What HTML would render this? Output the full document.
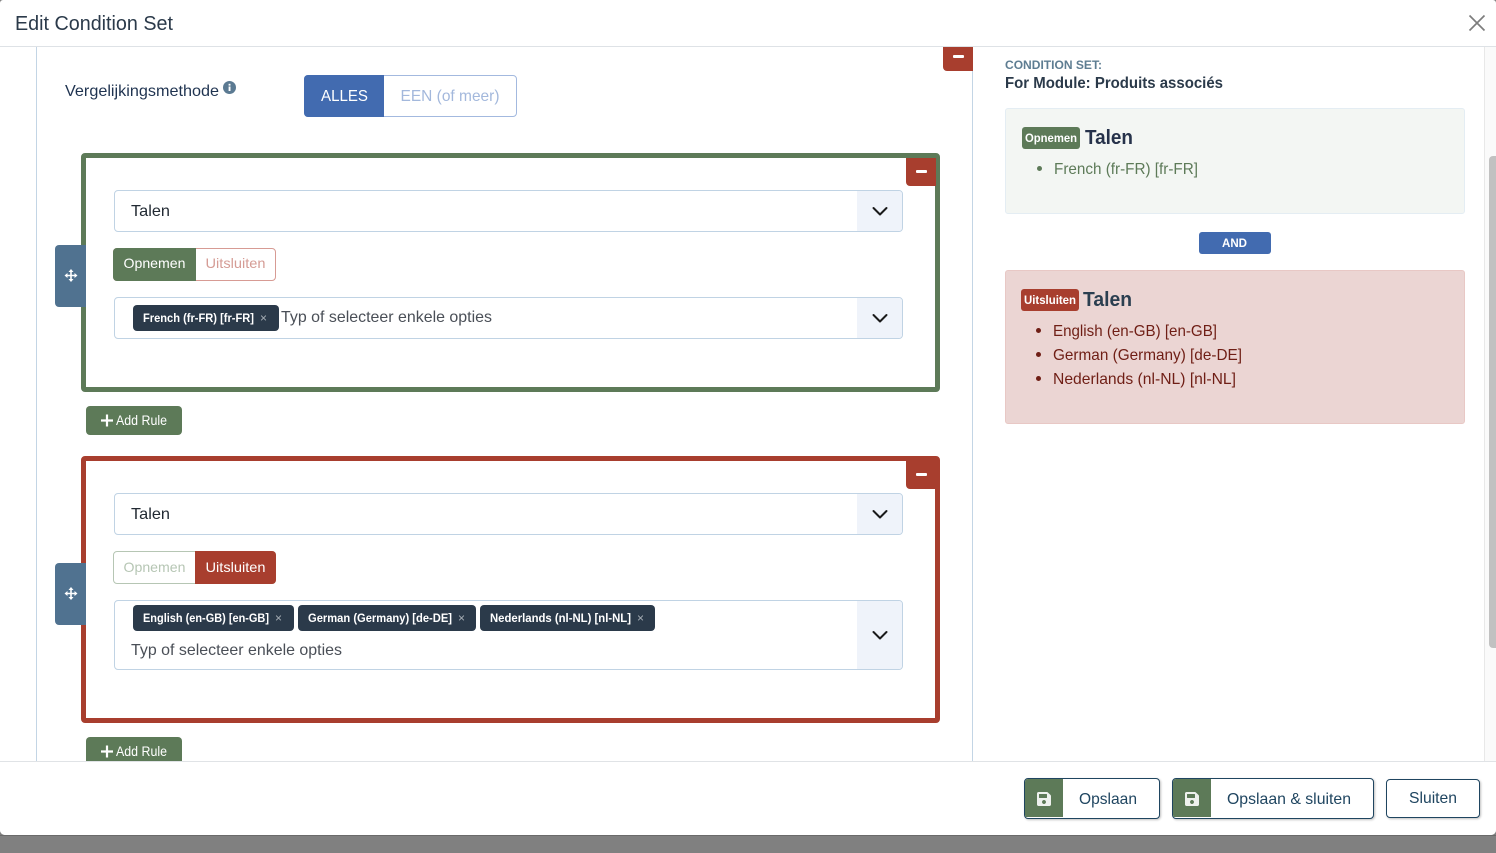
<!DOCTYPE html>
<html lang="nl">
<head>
<meta charset="utf-8">
<title>Edit Condition Set</title>
<style>
html,body{margin:0;padding:0;width:1496px;height:853px;overflow:hidden;background:#808080}
#m{position:absolute;left:0;top:0;width:1496px;height:835px;background:#fff;border-radius:3px 3px 5px 5px;overflow:hidden}
.b{position:absolute;box-sizing:border-box}
svg{position:absolute;left:0;top:0}
text{font-family:"Liberation Sans",sans-serif;white-space:pre}
</style>
</head>
<body>
<div class="b" style="left:0;top:835px;width:1496px;height:1px;background:#6a6a6a"></div>
<div id="m">
  <!-- scrollbar -->
  <div class="b" style="left:1484px;top:47px;width:12px;height:714px;background:#fafafa;border-left:1px solid #e8e8e8"></div>
  <div class="b" style="left:1489px;top:156px;width:7px;height:492px;background:#c1c1c1;border-radius:4px 0 0 4px"></div>

  <!-- lines -->
  <div class="b" style="left:36px;top:47px;width:1px;height:714px;background:#c3d5e5"></div>
  <div class="b" style="left:972px;top:47px;width:1px;height:714px;background:#c3d5e5"></div>

  <!-- top minus -->
  <div class="b" style="left:943px;top:47px;width:30px;height:24px;background:#a83e2e;border-radius:0 0 0 4px"></div>
  <div class="b" style="left:953px;top:55px;width:11px;height:3px;background:#fff;border-radius:1px"></div>

  <!-- ALLES group -->
  <div class="b" style="left:304px;top:75px;width:213px;height:42px;border:1px solid #a3b9df;border-radius:4px"></div>
  <div class="b" style="left:304px;top:75px;width:80px;height:42px;background:#426bb0;border-radius:4px 0 0 4px"></div>

  <!-- green box -->
  <div class="b" style="left:81px;top:153px;width:859px;height:239px;border:5px solid #5d7a58;border-radius:4px"></div>
  <div class="b" style="left:906px;top:158px;width:30px;height:28px;background:#a83e2e;border-radius:0 0 0 4px"></div>
  <div class="b" style="left:916px;top:170px;width:11px;height:3px;background:#fff;border-radius:1px"></div>
  <div class="b" style="left:55px;top:245px;width:31px;height:62px;background:#507290;border-radius:4px 0 0 4px"></div>

  <div class="b" style="left:114px;top:190px;width:789px;height:42px;border:1px solid #c0d3e4;border-radius:4px;overflow:hidden"><div class="b" style="right:0;top:0;width:45px;height:40px;background:#eff3fa"></div></div>

  <div class="b" style="left:113px;top:248px;width:163px;height:33px;border:1px solid #d79b94;border-radius:4px"></div>
  <div class="b" style="left:113px;top:248px;width:83px;height:33px;background:#5d7a58;border-radius:4px 0 0 4px"></div>

  <div class="b" style="left:114px;top:297px;width:789px;height:42px;border:1px solid #c0d3e4;border-radius:4px;overflow:hidden"><div class="b" style="right:0;top:0;width:45px;height:40px;background:#eff3fa"></div></div>
  <div class="b" style="left:133px;top:305px;width:146px;height:26px;background:#2b3a4a;border-radius:4px"></div>

  <div class="b" style="left:86px;top:406px;width:96px;height:29px;background:#5d7a58;border-radius:4px"></div>

  <!-- red box -->
  <div class="b" style="left:81px;top:456px;width:859px;height:267px;border:5px solid #a83e2e;border-radius:4px"></div>
  <div class="b" style="left:906px;top:461px;width:30px;height:28px;background:#a83e2e;border-radius:0 0 0 4px"></div>
  <div class="b" style="left:916px;top:473px;width:11px;height:3px;background:#fff;border-radius:1px"></div>
  <div class="b" style="left:55px;top:563px;width:31px;height:62px;background:#507290;border-radius:4px 0 0 4px"></div>

  <div class="b" style="left:114px;top:493px;width:789px;height:42px;border:1px solid #c0d3e4;border-radius:4px;overflow:hidden"><div class="b" style="right:0;top:0;width:45px;height:40px;background:#eff3fa"></div></div>

  <div class="b" style="left:113px;top:551px;width:163px;height:33px;border:1px solid #b6c6b4;border-radius:4px"></div>
  <div class="b" style="left:195px;top:551px;width:81px;height:33px;background:#a83e2e;border-radius:0 4px 4px 0"></div>

  <div class="b" style="left:114px;top:600px;width:789px;height:70px;border:1px solid #c0d3e4;border-radius:4px;overflow:hidden"><div class="b" style="right:0;top:0;width:45px;height:68px;background:#eff3fa"></div></div>
  <div class="b" style="left:133px;top:605px;width:161px;height:26px;background:#2b3a4a;border-radius:4px"></div>
  <div class="b" style="left:298px;top:605px;width:178px;height:26px;background:#2b3a4a;border-radius:4px"></div>
  <div class="b" style="left:480px;top:605px;width:175px;height:26px;background:#2b3a4a;border-radius:4px"></div>

  <div class="b" style="left:86px;top:737px;width:96px;height:29px;background:#5d7a58;border-radius:4px"></div>

  <!-- right panels -->
  <div class="b" style="left:1005px;top:108px;width:460px;height:106px;background:#f3f6f3;border:1px solid #e4edf3;border-radius:3px"></div>
  <div class="b" style="left:1022px;top:127px;width:58px;height:22px;background:#5d7a58;border-radius:3px"></div>
  <div class="b" style="left:1199px;top:232px;width:72px;height:22px;background:#426bb0;border-radius:3px"></div>
  <div class="b" style="left:1005px;top:270px;width:460px;height:154px;background:#ebd5d3;border:1px solid #e8c8c5;border-radius:3px"></div>
  <div class="b" style="left:1021px;top:289px;width:58px;height:22px;background:#a83e2e;border-radius:3px"></div>

  <!-- header and footer -->
  <div class="b" style="left:0;top:46px;width:1496px;height:1px;background:#dee2e6"></div>
  <div class="b" style="left:0;top:761px;width:1496px;height:74px;background:#fff;border-top:1px solid #e0e3e6"></div>

  <div class="b" style="left:1024px;top:778px;width:136px;height:41px;background:#fff;border:1px solid #1f4560;border-radius:4px;box-shadow:1px 1px 2px rgba(0,0,0,.25);overflow:hidden"><div class="b" style="left:0;top:0;width:38px;height:38px;background:#5d7a58"></div></div>
  <div class="b" style="left:1172px;top:778px;width:202px;height:41px;background:#fff;border:1px solid #1f4560;border-radius:4px;box-shadow:1px 1px 2px rgba(0,0,0,.25);overflow:hidden"><div class="b" style="left:0;top:0;width:38px;height:38px;background:#5d7a58"></div></div>
  <div class="b" style="left:1386px;top:779px;width:94px;height:39px;background:#fff;border:1px solid #1f4560;border-radius:4px;box-shadow:1px 1px 2px rgba(0,0,0,.25)"></div>

  <svg width="1496" height="835" viewBox="0 0 1496 835">
    <!-- close -->
    <path d="M1469.5 15.5L1484.5 30.5M1484.5 15.5L1469.5 30.5" stroke="#7d7d7d" stroke-width="1.7" fill="none"/>
    <text x="15" y="30" font-size="20" fill="#2b3a4a" textLength="158" lengthAdjust="spacingAndGlyphs">Edit Condition Set</text>

    <text x="65" y="96" font-size="16" fill="#1f3350" textLength="154" lengthAdjust="spacingAndGlyphs">Vergelijkingsmethode</text>
    <circle cx="229.500" cy="87.500" r="6.500" fill="#5b7a92"/>
    <rect x="228.600" y="86.500" width="1.900" height="4.500" fill="#fff"/>
    <rect x="228.600" y="83.800" width="1.900" height="1.800" fill="#fff"/>

    <text x="321" y="101" font-size="16" fill="#fff" textLength="47" lengthAdjust="spacingAndGlyphs">ALLES</text>
    <text x="400.500" y="101" font-size="16" fill="#a3b8dc" textLength="99" lengthAdjust="spacingAndGlyphs">EEN (of meer)</text>

    <!-- chevrons -->
    <g fill="none" stroke="#1a1a1a" stroke-width="2" stroke-linecap="round" stroke-linejoin="round">
      <path d="M873.500 208L880 214.500L886.500 208"/>
      <path d="M873.500 315L880 321.500L886.500 315"/>
      <path d="M873.500 511L880 517.500L886.500 511"/>
      <path d="M873.500 632L880 638.500L886.500 632"/>
    </g>

    <!-- move icons -->
    <g fill="none" stroke="#fff" stroke-width="1.600" stroke-linecap="butt">
      <path d="M71 270.500V280.500M66 275.500H76"/>
      <path d="M71 588.500V598.500M66 593.500H76"/>
    </g>
    <g fill="#fff">
      <path d="M71 269L73.500 272H68.500ZM71 282L73.500 279H68.500ZM64.500 275.500L67.500 273V278ZM77.500 275.500L74.500 273V278Z"/>
      <path d="M71 587L73.500 590H68.500ZM71 600L73.500 597H68.500ZM64.500 593.500L67.500 591V596ZM77.500 593.500L74.500 591V596Z"/>
    </g>

    <!-- green block text -->
    <text x="131" y="216" font-size="16" fill="#222a33" textLength="39" lengthAdjust="spacingAndGlyphs">Talen</text>
    <text x="123.500" y="268" font-size="14" fill="#fff" textLength="62" lengthAdjust="spacingAndGlyphs">Opnemen</text>
    <text x="205.500" y="268" font-size="14" fill="#d59c95" textLength="60" lengthAdjust="spacingAndGlyphs">Uitsluiten</text>
    <text x="143" y="322" font-size="12" font-weight="bold" fill="#fff" textLength="111" lengthAdjust="spacingAndGlyphs">French (fr-FR) [fr-FR]</text>
    <text x="260" y="322" font-size="12" fill="#a9b0b7">×</text>
    <text x="281" y="322" font-size="16" fill="#4a4f57" textLength="211" lengthAdjust="spacingAndGlyphs">Typ of selecteer enkele opties</text>

    <path d="M107 414.500V426.500M101 420.500H113" stroke="#fff" stroke-width="2.200"/>
    <text x="116" y="425" font-size="14" fill="#fff" textLength="51" lengthAdjust="spacingAndGlyphs">Add Rule</text>

    <!-- red block text -->
    <text x="131" y="519" font-size="16" fill="#222a33" textLength="39" lengthAdjust="spacingAndGlyphs">Talen</text>
    <text x="123.500" y="572" font-size="14" fill="#b6c6b4" textLength="62" lengthAdjust="spacingAndGlyphs">Opnemen</text>
    <text x="205.500" y="572" font-size="14" fill="#fff" textLength="60" lengthAdjust="spacingAndGlyphs">Uitsluiten</text>
    <text x="143" y="622" font-size="12" font-weight="bold" fill="#fff" textLength="126" lengthAdjust="spacingAndGlyphs">English (en-GB) [en-GB]</text>
    <text x="275" y="622" font-size="12" fill="#a9b0b7">×</text>
    <text x="308" y="622" font-size="12" font-weight="bold" fill="#fff" textLength="144" lengthAdjust="spacingAndGlyphs">German (Germany) [de-DE]</text>
    <text x="458" y="622" font-size="12" fill="#a9b0b7">×</text>
    <text x="490" y="622" font-size="12" font-weight="bold" fill="#fff" textLength="141" lengthAdjust="spacingAndGlyphs">Nederlands (nl-NL) [nl-NL]</text>
    <text x="637" y="622" font-size="12" fill="#a9b0b7">×</text>
    <text x="131" y="655" font-size="16" fill="#4a4f57" textLength="211" lengthAdjust="spacingAndGlyphs">Typ of selecteer enkele opties</text>

    <path d="M107 745.500V757.500M101 751.500H113" stroke="#fff" stroke-width="2.200"/>
    <text x="116" y="756" font-size="14" fill="#fff" textLength="51" lengthAdjust="spacingAndGlyphs">Add Rule</text>

    <!-- right column -->
    <text x="1005" y="69" font-size="12" font-weight="bold" fill="#5e7d92" textLength="97" lengthAdjust="spacingAndGlyphs">CONDITION SET:</text>
    <text x="1005" y="88" font-size="16" font-weight="bold" fill="#2b3a4a" textLength="218" lengthAdjust="spacingAndGlyphs">For Module: Produits associés</text>

    <text x="1025" y="142" font-size="12" font-weight="bold" fill="#fff" textLength="52" lengthAdjust="spacingAndGlyphs">Opnemen</text>
    <text x="1085" y="144" font-size="20" font-weight="bold" fill="#26324a" textLength="48" lengthAdjust="spacingAndGlyphs">Talen</text>
    <circle cx="1039.500" cy="168.500" r="2.500" fill="#5d7a58"/>
    <text x="1054" y="174" font-size="16" fill="#5d7a58" textLength="144" lengthAdjust="spacingAndGlyphs">French (fr-FR) [fr-FR]</text>

    <text x="1222" y="247" font-size="12" font-weight="bold" fill="#fff" textLength="25" lengthAdjust="spacingAndGlyphs">AND</text>

    <text x="1024" y="304" font-size="12" font-weight="bold" fill="#fff" textLength="52" lengthAdjust="spacingAndGlyphs">Uitsluiten</text>
    <text x="1083" y="306" font-size="20" font-weight="bold" fill="#2b3f50" textLength="49" lengthAdjust="spacingAndGlyphs">Talen</text>
    <g fill="#6f1e15">
      <circle cx="1038.500" cy="330.500" r="2.500"/>
      <circle cx="1038.500" cy="354.500" r="2.500"/>
      <circle cx="1038.500" cy="378.500" r="2.500"/>
    </g>
    <text x="1053" y="336" font-size="16" fill="#6f1e15" textLength="164" lengthAdjust="spacingAndGlyphs">English (en-GB) [en-GB]</text>
    <text x="1053" y="360" font-size="16" fill="#6f1e15" textLength="189" lengthAdjust="spacingAndGlyphs">German (Germany) [de-DE]</text>
    <text x="1053" y="384" font-size="16" fill="#6f1e15" textLength="183" lengthAdjust="spacingAndGlyphs">Nederlands (nl-NL) [nl-NL]</text>

    <!-- footer -->
    <g fill="#eef1ee">
      <path transform="translate(1037 791) scale(0.03125)" d="M433.941 129.941l-83.882-83.882A48 48 0 0 0 316.118 32H48C21.49 32 0 53.49 0 80v352c0 26.51 21.49 48 48 48h352c26.51 0 48-21.49 48-48V163.882a48 48 0 0 0-14.059-33.941zM224 416c-35.346 0-64-28.654-64-64 0-35.346 28.654-64 64-64s64 28.654 64 64c0 35.346-28.654 64-64 64zm96-304.52V212c0 6.627-5.373 12-12 12H76c-6.627 0-12-5.373-12-12V108c0-6.627 5.373-12 12-12h228.52c3.183 0 6.235 1.264 8.485 3.515l3.48 3.48A11.996 11.996 0 0 1 320 111.48z"/>
      <path transform="translate(1185 791) scale(0.03125)" d="M433.941 129.941l-83.882-83.882A48 48 0 0 0 316.118 32H48C21.49 32 0 53.49 0 80v352c0 26.51 21.49 48 48 48h352c26.51 0 48-21.49 48-48V163.882a48 48 0 0 0-14.059-33.941zM224 416c-35.346 0-64-28.654-64-64 0-35.346 28.654-64 64-64s64 28.654 64 64c0 35.346-28.654 64-64 64zm96-304.52V212c0 6.627-5.373 12-12 12H76c-6.627 0-12-5.373-12-12V108c0-6.627 5.373-12 12-12h228.52c3.183 0 6.235 1.264 8.485 3.515l3.48 3.48A11.996 11.996 0 0 1 320 111.48z"/>
    </g>
    <text x="1079" y="804" font-size="16" fill="#1f4560" textLength="58" lengthAdjust="spacingAndGlyphs">Opslaan</text>
    <text x="1227" y="804" font-size="16" fill="#1f4560" textLength="124" lengthAdjust="spacingAndGlyphs">Opslaan &amp; sluiten</text>
    <text x="1409" y="803" font-size="16" fill="#1f4560" textLength="48" lengthAdjust="spacingAndGlyphs">Sluiten</text>
  </svg>
</div>
</body>
</html>
